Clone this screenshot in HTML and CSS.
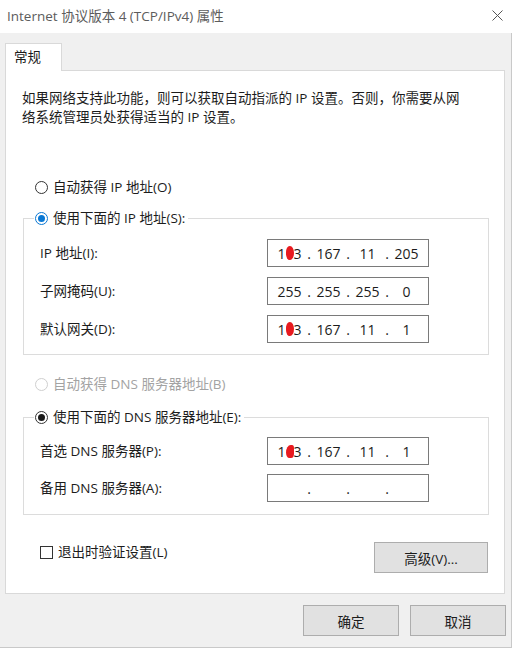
FILE: index.html
```html
<!DOCTYPE html>
<html lang="zh-CN">
<head>
<meta charset="utf-8">
<title>Internet 协议版本 4 (TCP/IPv4) 属性</title>
<link rel="stylesheet" href="styles.css">
</head>
<body>
<div class="window">
  <div class="titlebar">
    <span class="title">Internet 协议版本 4 (TCP/IPv4) 属性</span>
    <svg class="close" width="11" height="11" viewBox="0 0 11 11"><path d="M0.5 0.5 L10.5 10.5 M10.5 0.5 L0.5 10.5" stroke="#555" stroke-width="1" fill="none"/></svg>
  </div>
  <div class="client">
    <div class="tabs"><div class="tab">常规</div></div>
    <div class="panel">
      <p class="intro">如果网络支持此功能，则可以获取自动指派的 IP 设置。否则，你需要从网<br>络系统管理员处获得适当的 IP 设置。</p>

      <div class="radio-row"><span class="radio"></span>自动获得 IP 地址(O)</div>
      <fieldset class="group">
        <legend><span class="radio checked focus"></span>使用下面的 IP 地址(S):</legend>
        <div class="field-row">
          <span class="label">IP 地址(I):</span>
          <div class="ipbox"><span class="oct">1<span class="blob"></span>3</span><span class="dot">.</span><span class="oct">167</span><span class="dot">.</span><span class="oct">11</span><span class="dot">.</span><span class="oct">205</span></div>
        </div>
        <div class="field-row">
          <span class="label">子网掩码(U):</span>
          <div class="ipbox"><span class="oct">255</span><span class="dot">.</span><span class="oct">255</span><span class="dot">.</span><span class="oct">255</span><span class="dot">.</span><span class="oct">0</span></div>
        </div>
        <div class="field-row">
          <span class="label">默认网关(D):</span>
          <div class="ipbox"><span class="oct">1<span class="blob"></span>3</span><span class="dot">.</span><span class="oct">167</span><span class="dot">.</span><span class="oct">11</span><span class="dot">.</span><span class="oct">1</span></div>
        </div>
      </fieldset>

      <div class="radio-row disabled second"><span class="radio"></span>自动获得 DNS 服务器地址(B)</div>
      <fieldset class="group dns">
        <legend><span class="radio checked"></span>使用下面的 DNS 服务器地址(E):</legend>
        <div class="field-row">
          <span class="label">首选 DNS 服务器(P):</span>
          <div class="ipbox"><span class="oct">1<span class="blob flame"></span>3</span><span class="dot">.</span><span class="oct">167</span><span class="dot">.</span><span class="oct">11</span><span class="dot">.</span><span class="oct">1</span></div>
        </div>
        <div class="field-row">
          <span class="label">备用 DNS 服务器(A):</span>
          <div class="ipbox"><span class="oct"></span><span class="dot">.</span><span class="oct"></span><span class="dot">.</span><span class="oct"></span><span class="dot">.</span><span class="oct"></span></div>
        </div>
      </fieldset>

      <div class="bottom-row">
        <label class="check-row"><span class="checkbox"></span>退出时验证设置(L)</label>
        <button class="btn advanced">高级(V)...</button>
      </div>
    </div>
  </div>
  <div class="footer">
    <button class="btn">确定</button>
    <button class="btn">取消</button>
  </div>
</div>
</body>
</html>
```

FILE: styles.css
```css
html, body {
  margin: 0;
  padding: 0;
  background: #ffffff;
}

body {
  font-family: "Open Sans", "Noto Sans CJK SC", sans-serif;
  font-size: 13.5px;
  color: #1c1c1c;
}

.window {
  width: 512px;
  height: 648px;
  box-sizing: border-box;
  display: flex;
  flex-direction: column;
}

.titlebar {
  height: 33px;
  flex: none;
  background: #ffffff;
  display: flex;
  align-items: center;
  justify-content: space-between;
  padding: 0 9px 0 7px;
}

.title {
  color: #5c5c5c;
  font-size: 13.5px;
  line-height: 20px;
  padding-bottom: 1px;
}

.close {
  display: block;
  margin-bottom: 3px;
}

.client {
  flex: none;
  background: #f0f0f0;
  padding: 10px 6px 0 5px;
  border-right: 1px solid #c9c9c9;
}

.tabs {
  display: flex;
  height: 27px;
}

.tab {
  position: relative;
  z-index: 1;
  width: 57px;
  height: 28px;
  box-sizing: border-box;
  background: #ffffff;
  border: 1px solid #d9d9d9;
  border-bottom: none;
  padding-left: 8px;
  line-height: 26px;
}

.panel {
  background: #ffffff;
  border: 1px solid #d9d9d9;
  width: 500px;
  box-sizing: border-box;
  padding: 18px 16px 20px 17px;
}

.intro {
  margin: 0 0 0 -1px;
  line-height: 19px;
  white-space: nowrap;
}

.radio-row {
  display: flex;
  align-items: center;
  height: 20px;
  line-height: 20px;
  margin-top: 50px;
  padding-left: 12px;
}

.radio-row.second {
  margin-top: 19px;
}

.radio-row.disabled {
  color: #a3a3a3;
}

.radio {
  position: relative;
  width: 13px;
  height: 13px;
  box-sizing: border-box;
  border: 1px solid #333333;
  border-radius: 50%;
  background: #ffffff;
  margin-right: 5px;
  flex: none;
}

.disabled .radio {
  border-color: #cfcfcf;
}

.radio.checked::after {
  content: "";
  position: absolute;
  left: 2px;
  top: 2px;
  width: 7px;
  height: 7px;
  border-radius: 50%;
  background: #1a1a1a;
}

.radio.focus {
  border-color: #0a78d4;
}

.radio.focus::after {
  background: #0a78d4;
}

.group {
  width: 466px;
  box-sizing: border-box;
  margin: 11px 0 0 0;
  border: 1px solid #dcdcdc;
  padding: 11px 0 11px 16px;
  display: flex;
  flex-direction: column;
  gap: 10px;
  min-width: 0;
}

.group.dns {
  margin-top: 13px;
  padding-top: 10px;
  padding-bottom: 12px;
  gap: 9px;
}

.group legend {
  display: flex;
  align-items: center;
  height: 20px;
  line-height: 20px;
  margin-left: -6px;
  padding: 0 3px 0 1px;
}

.field-row {
  display: flex;
  align-items: center;
  height: 28px;
}

.label {
  width: 227px;
  flex: none;
  line-height: 20px;
}

.ipbox {
  width: 162px;
  height: 28px;
  box-sizing: border-box;
  border: 1px solid #7a7a7a;
  background: #ffffff;
  display: flex;
  align-items: center;
  padding-left: 5px;
  font-size: 14px;
}

.oct {
  width: 33px;
  text-align: center;
  display: flex;
  justify-content: center;
  align-items: center;
  height: 20px;
}

.dot {
  width: 6px;
  text-align: center;
}

.blob {
  display: inline-block;
  width: 8px;
  height: 14px;
  background: #e81a1f;
  border-radius: 45% 50% 50% 45%;
}

.blob.flame {
  border-radius: 70% 30% 45% 50%;
  height: 13px;
}

.bottom-row {
  display: flex;
  justify-content: space-between;
  align-items: flex-start;
  margin-top: 27px;
  width: 465px;
}

.check-row {
  display: flex;
  align-items: center;
  height: 20px;
  line-height: 20px;
  padding-left: 17px;
}

.checkbox {
  width: 13px;
  height: 13px;
  box-sizing: border-box;
  border: 1px solid #333333;
  background: #ffffff;
  margin-right: 5px;
}

.btn {
  font-family: "Open Sans", "Noto Sans CJK SC", sans-serif;
  font-size: 13.5px;
  color: #1c1c1c;
  background: #e1e1e1;
  border: 1px solid #adadad;
  width: 96px;
  height: 31px;
  padding: 0;
  margin: 0;
}

.btn.advanced {
  width: 114px;
}

.footer {
  flex: 1;
  background: #f0f0f0;
  display: flex;
  justify-content: flex-end;
  align-items: flex-start;
  gap: 11px;
  padding: 11px 5px 0 0;
  border-right: 1px solid #c9c9c9;
  border-bottom: 1px solid #c9c9c9;
}
```
